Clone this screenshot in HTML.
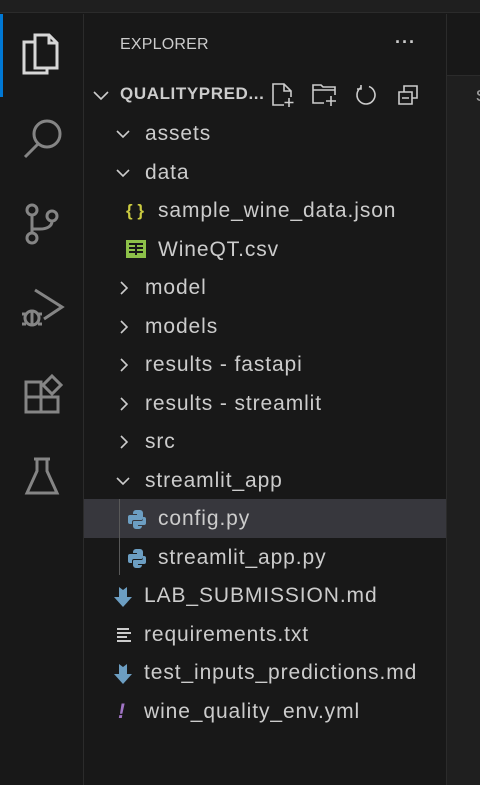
<!DOCTYPE html>
<html><head><meta charset="utf-8"><style>
*{margin:0;padding:0;box-sizing:border-box}
body{width:480px;height:785px;background:#181818;position:relative;overflow:hidden;font-family:"Liberation Sans",sans-serif;color:#cccccc}
.abs{position:absolute}
.row{position:absolute;left:84px;width:362px;height:38px;font-size:21px;letter-spacing:0.9px;line-height:38px;color:#cccccc;white-space:nowrap}
.row span{position:absolute;top:0}
svg{position:absolute;overflow:visible}
</style></head><body>
<div class="abs" style="left:0;top:0;width:480px;height:13px;background:#1f1f1f;border-bottom:1px solid #2b2b2b"></div>
<div class="abs" style="left:0;top:14px;width:3px;height:83px;background:#0078d4"></div>
<div class="abs" style="left:83px;top:14px;width:1px;height:771px;background:#2b2b2b"></div>
<div class="abs" style="left:446px;top:14px;width:1px;height:771px;background:#2b2b2b"></div>
<div class="abs" style="left:447px;top:75px;width:33px;height:710px;background:#1f1f1f;border-top:1px solid #2b2b2b"></div>
<div class="abs" style="left:476px;top:84px;font-size:20px;color:#9d9d9d">s</div>

<svg style="left:20px;top:33px" width="42" height="42" viewBox="0 0 42 42" fill="none" stroke="#d7d7d7" stroke-width="3"><path d="M15 2h14l8 8v25H15z"/><path d="M29 2v8h8"/><path d="M15 9H4v31h23v-5"/></svg>
<svg style="left:22px;top:117px" width="42" height="42" viewBox="0 0 42 42" fill="none" stroke="#858585" stroke-width="3"><circle cx="25" cy="17" r="13"/><path d="M16 27L3 40"/></svg>
<svg style="left:24px;top:202px" width="36" height="44" viewBox="0 0 36 44" fill="none" stroke="#858585" stroke-width="3"><circle cx="8" cy="8" r="5"/><circle cx="28" cy="14" r="5"/><circle cx="8" cy="36" r="5"/><path d="M8 13v18M28 19c0 6-6 8-12 8h-8"/></svg>
<svg style="left:20px;top:286px" width="44" height="44" viewBox="0 0 44 44" fill="none" stroke="#858585" stroke-width="3"><path d="M15 4l27 17-18 12"/><circle cx="12" cy="32" r="7"/><path d="M2 28h4M2 38h4M18 28h4M18 38h4M12 25v14"/></svg>
<svg style="left:24px;top:374px" width="40" height="40" viewBox="0 0 40 40" fill="none" stroke="#858585" stroke-width="3"><path d="M2 8h15v30H2zM2 23h32v15H17"/><path d="M28 2l9 9-9 9-9-9z"/></svg>
<svg style="left:24px;top:457px" width="36" height="40" viewBox="0 0 36 40" fill="none" stroke="#858585" stroke-width="3"><path d="M10 2h16M13 2v12L3 36h30L23 14V2"/></svg>

<div class="abs" style="left:120px;top:36px;font-size:16px;color:#cccccc;letter-spacing:0.2px">EXPLORER</div>
<div class="abs" style="left:395px;top:32px;font-size:18px;color:#cccccc;letter-spacing:1px;font-weight:bold">···</div>

<svg style="left:93px;top:90px" width="16" height="12" viewBox="0 0 16 12" fill="none" stroke="#cccccc" stroke-width="1.6"><path d="M1 2l7 7 7-7"/></svg>
<div class="abs" style="left:120px;top:84px;font-size:17px;font-weight:bold;color:#cccccc;letter-spacing:0.6px">QUALITYPRED...</div>
<svg style="left:272px;top:83px" width="24" height="24" viewBox="0 0 24 24" fill="none" stroke="#cccccc" stroke-width="1.6"><path d="M12 22H1V1h11l7 7v6M12 1v7h7M17 15v9M12.5 19.5h9"/></svg>
<svg style="left:312px;top:83px" width="26" height="24" viewBox="0 0 26 24" fill="none" stroke="#cccccc" stroke-width="1.6"><path d="M12 20H1V2h8l2 2h12v8M1 7h22M19 13v10M14 18h10"/></svg>
<svg style="left:355px;top:84px" width="22" height="22" viewBox="0 0 22 22" fill="none" stroke="#cccccc" stroke-width="1.6"><path d="M14 2.5A9 9 0 1 1 6 3.5M6 1v4H2"/></svg>
<svg style="left:398px;top:84px" width="22" height="22" viewBox="0 0 22 22" fill="none" stroke="#cccccc" stroke-width="1.6"><path d="M1 8h13v12H1zM6 8V2h13v12h-5M4 14h7"/></svg>

<div class="row" style="top:115px"><svg style="left:32px;top:14px" width="14" height="10" viewBox="0 0 14 10" fill="none" stroke="#cccccc" stroke-width="1.6"><path d="M1 2l6 6 6-6"/></svg><span style="left:61px">assets</span></div>
<div class="row" style="top:154px"><svg style="left:32px;top:14px" width="14" height="10" viewBox="0 0 14 10" fill="none" stroke="#cccccc" stroke-width="1.6"><path d="M1 2l6 6 6-6"/></svg><span style="left:61px">data</span></div>
<div class="row" style="top:192px"><span style="left:42px;color:#cbcb41;font-size:17px;font-weight:bold;letter-spacing:0">{ }</span><span style="left:74px">sample_wine_data.json</span></div>
<div class="row" style="top:231px"><svg style="left:42px;top:9px" width="20" height="18" viewBox="0 0 20 18"><rect width="20" height="18" fill="#8dc149"/><path d="M3 4h14M3 8h14M3 12h14M10 3v12" stroke="#181818" stroke-width="2"/></svg><span style="left:74px">WineQT.csv</span></div>
<div class="row" style="top:269px"><svg style="left:35px;top:12px" width="10" height="14" viewBox="0 0 10 14" fill="none" stroke="#cccccc" stroke-width="1.6"><path d="M2 1l6 6-6 6"/></svg><span style="left:61px">model</span></div>
<div class="row" style="top:308px"><svg style="left:35px;top:12px" width="10" height="14" viewBox="0 0 10 14" fill="none" stroke="#cccccc" stroke-width="1.6"><path d="M2 1l6 6-6 6"/></svg><span style="left:61px">models</span></div>
<div class="row" style="top:346px"><svg style="left:35px;top:12px" width="10" height="14" viewBox="0 0 10 14" fill="none" stroke="#cccccc" stroke-width="1.6"><path d="M2 1l6 6-6 6"/></svg><span style="left:61px">results - fastapi</span></div>
<div class="row" style="top:385px"><svg style="left:35px;top:12px" width="10" height="14" viewBox="0 0 10 14" fill="none" stroke="#cccccc" stroke-width="1.6"><path d="M2 1l6 6-6 6"/></svg><span style="left:61px">results - streamlit</span></div>
<div class="row" style="top:423px"><svg style="left:35px;top:12px" width="10" height="14" viewBox="0 0 10 14" fill="none" stroke="#cccccc" stroke-width="1.6"><path d="M2 1l6 6-6 6"/></svg><span style="left:61px">src</span></div>
<div class="row" style="top:462px"><svg style="left:32px;top:14px" width="14" height="10" viewBox="0 0 14 10" fill="none" stroke="#cccccc" stroke-width="1.6"><path d="M1 2l6 6 6-6"/></svg><span style="left:61px">streamlit_app</span></div>
<div class="row" style="top:499px;height:39px;background:#37373d"><span style="left:74px;top:1px">config.py</span></div>
<div class="row" style="top:539px"><span style="left:74px">streamlit_app.py</span></div>
<div class="abs" style="left:119px;top:499px;width:1px;height:76px;background:#585858"></div>
<svg style="left:127px;top:509px" width="20" height="20" viewBox="0 0 20 20" fill="#6c9ec2"><path d="M9 1h4a3 3 0 0 1 3 3v5a2 2 0 0 1-2 2H7a2 2 0 0 0-2 2v2H3a2 2 0 0 1-2-2V8a2 2 0 0 1 2-2h7V5H6V4a3 3 0 0 1 3-3z"/><path d="M6 13a1 1 0 0 1 1-1h7a2 2 0 0 0 2-2V8h1a2 2 0 0 1 2 2v4a2 2 0 0 1-2 2h-6v1h4a3 3 0 0 1-3 3H9a3 3 0 0 1-3-3z"/></svg>
<svg style="left:127px;top:548px" width="20" height="20" viewBox="0 0 20 20" fill="#6c9ec2"><path d="M9 1h4a3 3 0 0 1 3 3v5a2 2 0 0 1-2 2H7a2 2 0 0 0-2 2v2H3a2 2 0 0 1-2-2V8a2 2 0 0 1 2-2h7V5H6V4a3 3 0 0 1 3-3z"/><path d="M6 13a1 1 0 0 1 1-1h7a2 2 0 0 0 2-2V8h1a2 2 0 0 1 2 2v4a2 2 0 0 1-2 2h-6v1h4a3 3 0 0 1-3 3H9a3 3 0 0 1-3-3z"/></svg>
<div class="row" style="top:577px"><svg style="left:30px;top:10px" width="18" height="20" viewBox="0 0 18 20" fill="#6c9ec2"><path d="M5 0l4 3 4-3v10h5l-9 10-9-10h5z"/></svg><span style="left:60px">LAB_SUBMISSION.md</span></div>
<div class="row" style="top:616px"><svg style="left:33px;top:12px" width="16" height="14" viewBox="0 0 16 14" fill="#cccccc"><rect x="0" y="0" width="12" height="2"/><rect x="0" y="4" width="14" height="2"/><rect x="0" y="8" width="10" height="2"/><rect x="0" y="12" width="14" height="2"/></svg><span style="left:60px">requirements.txt</span></div>
<div class="row" style="top:654px"><svg style="left:30px;top:10px" width="18" height="20" viewBox="0 0 18 20" fill="#6c9ec2"><path d="M5 0l4 3 4-3v10h5l-9 10-9-10h5z"/></svg><span style="left:60px">test_inputs_predictions.md</span></div>
<div class="row" style="top:693px"><span style="left:34px;color:#a074c4;font-weight:bold;font-style:italic">!</span><span style="left:60px">wine_quality_env.yml</span></div>
</body></html>
